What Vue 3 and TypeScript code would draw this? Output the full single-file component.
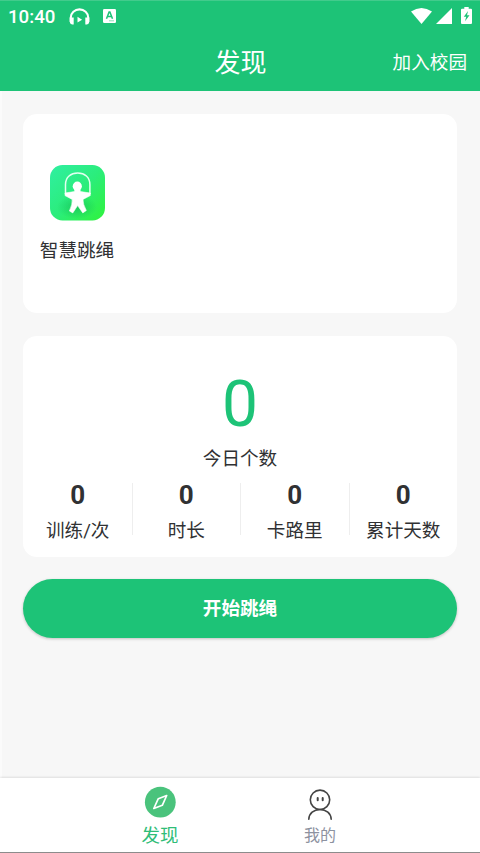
<script setup lang="ts">
interface Stat {
  value: number
  label: string
}

const todayCount = 0
const stats: Stat[] = [
  { value: 0, label: '训练/次' },
  { value: 0, label: '时长' },
  { value: 0, label: '卡路里' },
  { value: 0, label: '累计天数' },
]
</script>

<template>
  <div class="screen">
    <header class="header">
      <div class="status">
        <span class="clock">10:40</span>
        <svg class="headset" width="21" height="18" viewBox="0 0 21 18">
          <path d="M1.800 14V9.600a8.700 8.200 0 0 1 17.400 0V14" fill="none" stroke="#fff" stroke-width="2.100" />
          <path d="M.7 9.500h4v6.900H3Q.7 16 .7 13.600zM20.300 9.500h-4v6.900H18Q20.300 16 20.300 13.600zM8.500 8.800l4.600 2.900-4.600 2.900z" fill="#fff" />
        </svg>
        <svg class="badge" width="13" height="14" viewBox="0 0 13 14">
          <rect width="13" height="14" rx="1.200" fill="#fff" />
          <path d="M3.500 9.800 6.100 3h.8l2.600 6.800M4.500 7.400h4" fill="none" stroke="#1dc377" stroke-width="1.500" />
          <path d="M6 11.800h5" stroke="#8edfba" stroke-width="1" />
        </svg>
        <div class="signals">
          <svg width="21" height="16" viewBox="0 0 21 16">
            <path d="M0 3.500Q10.500-3.500 21 3.500L10.500 16z" fill="#fff" />
          </svg>
          <svg width="16" height="16" viewBox="0 0 16 16"><path d="M16 0v16H0z" fill="#fff" /></svg>
          <svg class="battery" width="11" height="17" viewBox="0 0 11 17">
            <path d="M3.300 0h4.400v1.700H10q1 0 1 1V16q0 1-1 1H1q-1 0-1-1V2.700q0-1 1-1h2.300z" fill="#fff" />
            <path d="M7 4 2.800 9.800h2.400L4 14.300 8.500 8.300H6z" fill="#1dc377" />
          </svg>
        </div>
      </div>
      <div class="titlebar">
        <h1>发现</h1>
        <span class="join">加入校园</span>
      </div>
    </header>

    <main class="content">
      <section class="card apps">
        <div class="app">
          <svg width="55" height="56" viewBox="0 0 55 56">
            <defs>
              <linearGradient id="tile" x1="0" y1="0" x2="1" y2="1">
                <stop offset="0" stop-color="#30efa2" />
                <stop offset=".5" stop-color="#2bed7c" />
                <stop offset="1" stop-color="#30f33b" />
              </linearGradient>
              <radialGradient id="shade">
                <stop offset="0" stop-color="#08a84e" stop-opacity=".5" />
                <stop offset="1" stop-color="#08a84e" stop-opacity="0" />
              </radialGradient>
            </defs>
            <rect width="55" height="55.500" rx="12.500" fill="url(#tile)" />
            <ellipse cx="27" cy="42" rx="20" ry="12" fill="url(#shade)" />
            <path d="M15.500 29V19.500C15.500 12 20.800 8 27.700 8S39.900 12 39.900 19.500V29" fill="none" stroke="#e2fff0" stroke-width="1.500" />
            <circle cx="27.300" cy="21.200" r="4.600" fill="#fff" />
            <path d="M15 28 24.400 26.600 25 24H29.800L30.500 26.600 40.300 28V30.600L33 34.400Q32.900 39 36.300 45.500L32.800 47.900 27.600 40.600 22.800 47.900 19.400 46Q22.600 39 22.200 34.400L15 30.600z" fill="#fff" stroke="#fff" stroke-width=".6" stroke-linejoin="round" />
          </svg>
          <span>智慧跳绳</span>
        </div>
      </section>

      <section class="card summary">
        <div class="total">{{ todayCount }}</div>
        <div class="caption">今日个数</div>
        <div class="stats">
          <div v-for="stat in stats" :key="stat.label" class="stat">
            <b>{{ stat.value }}</b>
            <span>{{ stat.label }}</span>
          </div>
        </div>
      </section>

      <button class="start" type="button">开始跳绳</button>
    </main>

    <nav class="tabs">
      <div class="tab active">
        <svg width="32" height="32" viewBox="0 0 32 32">
          <circle cx="16.300" cy="16.200" r="15.400" fill="#4ac37c" />
          <path d="M22.700 9.500 14.300 12.700 9.800 22.500 18.300 19.300z" fill="none" stroke="#fff" stroke-width="1.700" stroke-linejoin="round" />
        </svg>
        <span>发现</span>
      </div>
      <div class="tab">
        <svg width="32" height="32" viewBox="0 0 32 32">
          <g fill="none" stroke="#444" stroke-width="1.600" stroke-linecap="round">
            <circle cx="16" cy="13.800" r="9.700" />
            <path d="M4.800 33.300C5 27.500 9.800 23.500 16 23.500S27 27.500 27.200 33.300" />
            <path d="M13.700 12v2.200M18.700 12v2.200" stroke-width="2" />
          </g>
        </svg>
        <span>我的</span>
      </div>
    </nav>
  </div>
</template>

<style>
body {
  background: #f7f7f7;
}
</style>

<style scoped>
.screen {
  box-sizing: border-box;
  width: 480px;
  height: 853px;
  display: flex;
  flex-direction: column;
  overflow: hidden;
  background: #f7f7f7;
  color: #303133;
  font-family: Roboto, "Noto Sans CJK SC", sans-serif;
}
.header {
  box-sizing: border-box;
  height: 91px;
  flex: none;
  background: #1dc377;
  border-top: 1px solid #42cb8c;
  color: #fff;
}
.status {
  display: flex;
  align-items: flex-start;
  height: 31px;
  padding: 0 8px;
}
.clock {
  width: 61px;
  padding-top: 4px;
  font-size: 18.700px;
  font-weight: 500;
  line-height: 24px;
}
.headset {
  margin-top: 7px;
}
.badge {
  margin: 8px 0 0 13px;
}
.signals {
  display: flex;
  align-items: flex-end;
  gap: 4px;
  height: 23px;
  margin-left: auto;
}
.battery {
  margin-left: 5px;
}
.titlebar {
  display: grid;
  grid-template-columns: 1fr auto 1fr;
  align-items: center;
  height: 61px;
  padding: 0 13px 0 14px;
}
h1 {
  grid-column: 2;
  margin: 0;
  font-size: 26px;
  font-weight: 400;
  line-height: 40px;
}
.join {
  justify-self: end;
  font-size: 18.600px;
  line-height: 28px;
}
.content {
  flex: 1;
  padding: 23px 23px 0;
  box-shadow: inset 2px 0 #fbfbfb;
}
.card {
  box-sizing: border-box;
  background: #fff;
  border-radius: 14px;
}
.apps {
  height: 199px;
  padding: 51px 0 0 16px;
}
.app {
  display: flex;
  flex-direction: column;
  align-items: center;
  width: 76px;
  font-size: 18.600px;
  line-height: 28px;
}
.app span {
  margin-top: 16px;
}
.summary {
  height: 221px;
  margin-top: 23px;
  padding-top: 33px;
  text-align: center;
}
.total {
  height: 70px;
  color: #1dc377;
  font-size: 64px;
  line-height: 71px;
}
.caption {
  margin-top: 6px;
  font-size: 18.600px;
  line-height: 28px;
}
.stats {
  display: grid;
  grid-template-columns: repeat(4, 1fr);
  margin: 10px -1px 0 1px;
}
.stat {
  display: flex;
  flex-direction: column;
  height: 52px;
  border-right: 1px solid #eee;
}
.stat:last-child {
  border-right-color: transparent;
}
.stat b {
  font-size: 26px;
  line-height: 24px;
}
.stat span {
  margin-top: 10px;
  font-size: 18.600px;
  line-height: 28px;
}
.start {
  display: block;
  width: 100%;
  height: 59px;
  margin-top: 22px;
  padding: 1px 0 0;
  border: 0;
  border-radius: 30px;
  background: #1dc377;
  box-shadow: 0 1px 3px rgba(0, 0, 0, 0.22);
  color: #fff;
  font: 700 18.600px/28px Roboto, "Noto Sans CJK SC", sans-serif;
}
.tabs {
  box-sizing: border-box;
  display: flex;
  flex: none;
  justify-content: center;
  height: 75px;
  padding-top: 8px;
  background: #fff;
  border-bottom: 1px solid #8c8c8c;
  box-shadow: 0 -1px 2px rgba(0, 0, 0, 0.1);
}
.tab {
  display: flex;
  flex-direction: column;
  align-items: center;
  width: 160px;
  color: #8d929f;
  font-size: 16px;
  line-height: 28px;
}
.tab svg {
  overflow: visible;
}
.tab span {
  margin-top: 4px;
}
.active {
  color: #30bd78;
  font-size: 18.500px;
}
</style>
